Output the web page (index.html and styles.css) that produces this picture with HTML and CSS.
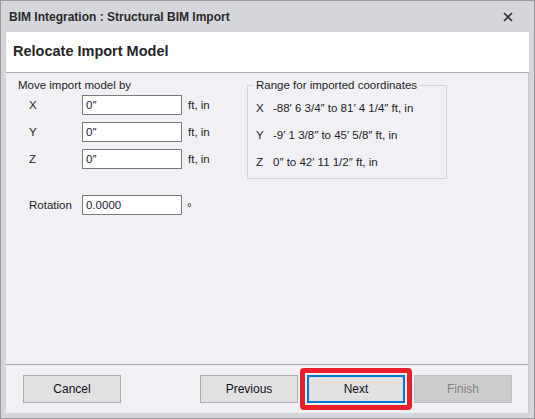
FILE: index.html
```html
<!DOCTYPE html>
<html>
<head>
<meta charset="utf-8">
<link rel="stylesheet" href="styles.css">
</head>
<body>
<div class="window">
  <div class="titlebar">
    <span class="title">BIM Integration : Structural BIM Import</span>
    <svg class="close" width="10" height="10" viewBox="0 0 10 10"><path d="M1 1L9 9M9 1L1 9" stroke="#333" stroke-width="1.6" fill="none"/></svg>
  </div>
  <div class="header">Relocate Import Model</div>
  <div class="content">
    <div class="main">
      <div class="move">
        <div class="move-title">Move import model by</div>
        <div class="grid">
          <span class="lbl">X</span><div class="input">0″</div><span class="unit">ft, in</span>
          <span class="lbl">Y</span><div class="input">0″</div><span class="unit">ft, in</span>
          <span class="lbl">Z</span><div class="input">0″</div><span class="unit">ft, in</span>
        </div>
        <div class="grid rot">
          <span class="lbl">Rotation</span><div class="input">0.0000</div><span class="unit deg">°</span>
        </div>
      </div>
      <fieldset class="range">
        <legend>Range for imported coordinates</legend>
        <div class="rrow"><span class="ax">X</span><span>-88′ 6 3/4″ to 81′ 4 1/4″ ft, in</span></div>
        <div class="rrow"><span class="ax">Y</span><span>-9′ 1 3/8″ to 45′ 5/8″ ft, in</span></div>
        <div class="rrow"><span class="ax">Z</span><span>0″ to 42′ 11 1/2″ ft, in</span></div>
      </fieldset>
    </div>
    <div class="footer">
      <button class="btn cancel">Cancel</button>
      <div class="spacer"></div>
      <button class="btn">Previous</button>
      <button class="btn next">Next<span class="ring"></span></button>
      <button class="btn disabled">Finish</button>
    </div>
  </div>
</div>
</body>
</html>
```
FILE: styles.css
```css
html, body {
  margin: 0;
  padding: 0;
  background: #ffffff;
}
.window {
  width: 535px;
  height: 419px;
  box-sizing: border-box;
  border: 1px solid #9a9a9e;
  background: #d5d6db;
  padding: 0 5px 5px 5px;
  display: flex;
  flex-direction: column;
  font-family: "Liberation Sans", Arial, sans-serif;
  font-size: 11.5px;
  color: #1e1e1e;
}
.titlebar {
  height: 31px;
  flex: none;
  display: flex;
  align-items: center;
  justify-content: space-between;
  padding: 0 16px 0 3px;
}
.title {
  font-weight: bold;
  font-size: 12px;
  color: #2a2a2a;
}
.close {
  display: block;
}
.header {
  flex: none;
  background: #ffffff;
  border-bottom: 1px solid #a7a7aa;
  box-sizing: border-box;
  height: 41px;
  display: flex;
  align-items: center;
  padding: 0 0 2px 7px;
  font-size: 14.5px;
  font-weight: bold;
  color: #262626;
}
.content {
  flex: 1;
  background: #f0f0f5;
  display: flex;
  flex-direction: column;
  border-right: 1px solid #c9c9cd;
}
.main {
  flex: 1;
  display: flex;
  padding: 5px 0 0 12px;
}
.move {
  width: 229px;
}
.move-title {
  line-height: 15px;
  margin-bottom: 2px;
}
.grid {
  display: grid;
  grid-template-columns: 64px 100px auto;
  grid-auto-rows: 20px;
  row-gap: 7px;
  align-items: center;
}
.grid.rot {
  margin-top: 26px;
}
.lbl {
  padding-left: 11px;
}
.input {
  box-sizing: border-box;
  height: 20px;
  border: 1px solid #7a7a7a;
  background: #ffffff;
  padding-left: 3px;
  line-height: 18px;
  color: #22223a;
}
.unit {
  padding-left: 6px;
}
.unit.deg {
  padding-left: 5px;
  margin-top: 4px;
}
.range {
  margin: 0;
  padding: 6px 8px 0 8px;
  width: 200px;
  height: 101px;
  box-sizing: border-box;
  border: 1px solid #d6d6da;
  align-self: flex-start;
}
.range legend {
  padding: 0 2px;
  margin-left: -2px;
  line-height: 14px;
}
.rrow {
  display: flex;
  height: 20px;
  align-items: center;
  margin-bottom: 7px;
}
.ax {
  width: 17px;
}
.footer {
  flex: none;
  border-top: 1px solid #a7a7aa;
  display: flex;
  align-items: flex-start;
  padding: 10px 16px 0 17px;
  gap: 9px;
  box-sizing: border-box;
  height: 49px;
}
.spacer {
  flex: 1;
}
.btn {
  position: relative;
  width: 98px;
  height: 28px;
  box-sizing: border-box;
  border: 1px solid #adadad;
  background: #e1e1e1;
  font-family: "Liberation Sans", Arial, sans-serif;
  font-size: 12px;
  color: #111122;
  padding: 0;
  margin: 0;
}
.btn.next {
  border: 2px solid #0078d7;
}
.btn.disabled {
  background: #cccccc;
  border-color: #bfbfbf;
  color: #848484;
}
.ring {
  position: absolute;
  left: -9px;
  right: -9px;
  top: -9px;
  bottom: -9px;
  border: 5px solid #e81e2a;
  border-radius: 4px;
}
```
